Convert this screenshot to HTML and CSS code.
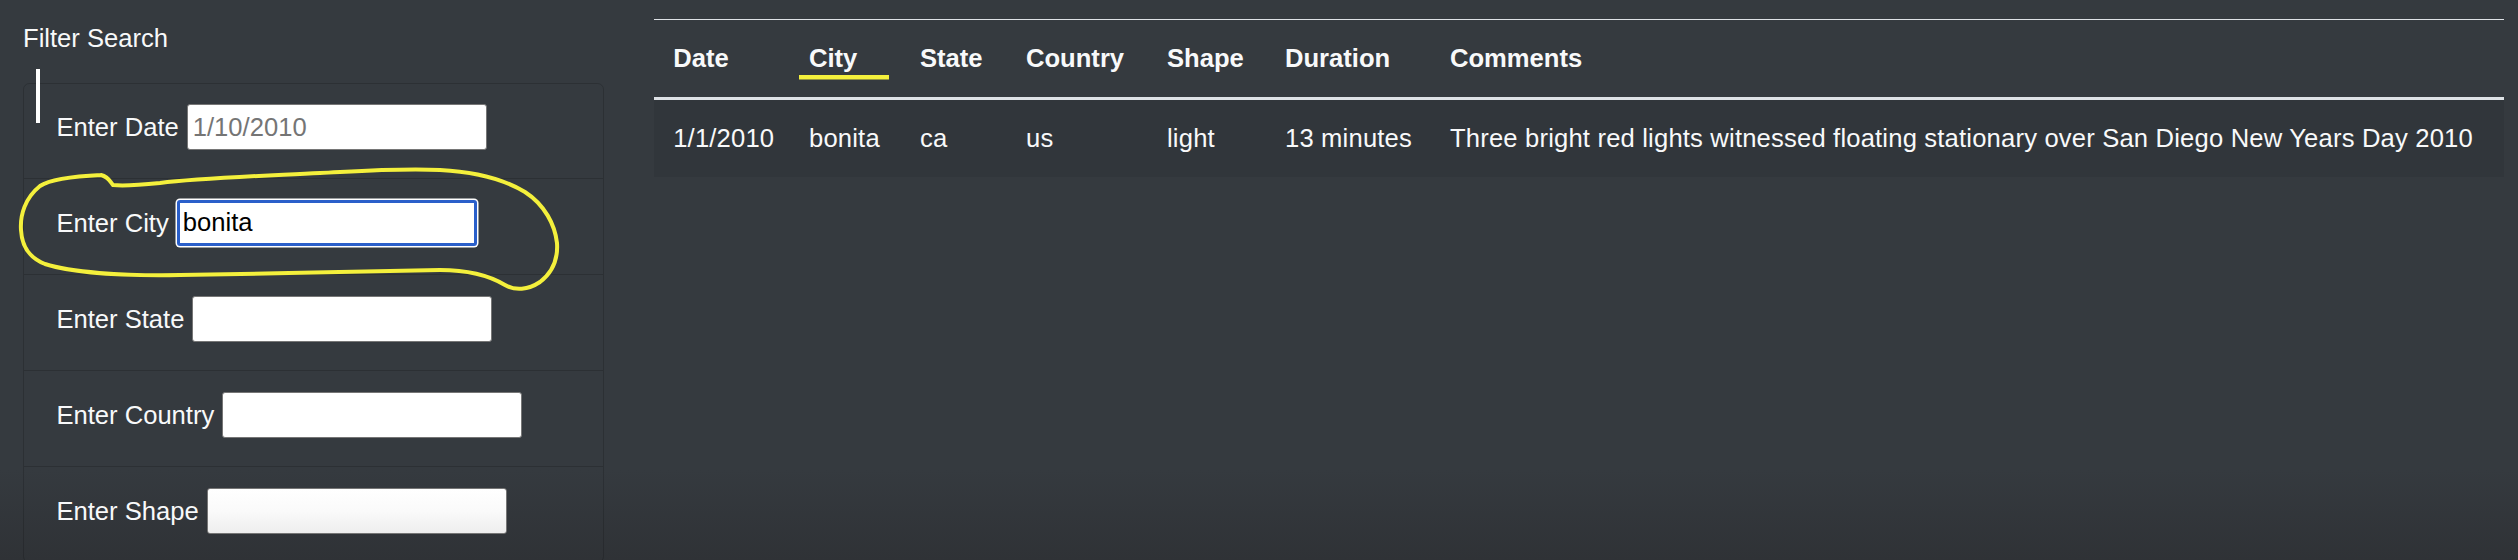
FILE: index.html
```html
<!DOCTYPE html>
<html lang="en">
<head>
<meta charset="utf-8">
<title>UFO Sightings</title>
<link rel="stylesheet" href="styles.css">
</head>
<body>
<div class="page">
  <aside class="sidebar">
    <h5 class="title">Filter Search</h5>
    <span class="caret-bar"></span>
    <ul class="filters">
      <li class="filter first">
        <label for="datetime">Enter Date</label>
        <input id="datetime" type="text" placeholder="1/10/2010">
      </li>
      <li class="filter">
        <label for="city">Enter City</label>
        <input id="city" class="focused" type="text" value="bonita">
      </li>
      <li class="filter">
        <label for="state">Enter State</label>
        <input id="state" type="text">
      </li>
      <li class="filter">
        <label for="country">Enter Country</label>
        <input id="country" type="text">
      </li>
      <li class="filter">
        <label for="shape">Enter Shape</label>
        <input id="shape" class="soft" type="text">
      </li>
    </ul>
  </aside>
  <main class="results">
    <table class="ufo-table">
      <colgroup>
        <col class="c-date"><col class="c-city"><col class="c-state"><col class="c-country"><col class="c-shape"><col class="c-duration"><col class="c-comments">
      </colgroup>
      <thead>
        <tr>
          <th>Date</th>
          <th>City</th>
          <th>State</th>
          <th>Country</th>
          <th>Shape</th>
          <th>Duration</th>
          <th>Comments</th>
        </tr>
      </thead>
      <tbody>
        <tr>
          <td>1/1/2010</td>
          <td>bonita</td>
          <td>ca</td>
          <td>us</td>
          <td>light</td>
          <td>13 minutes</td>
          <td>Three bright red lights witnessed floating stationary over San Diego New Years Day 2010</td>
        </tr>
      </tbody>
    </table>
  </main>
  <svg class="annotations" width="2518" height="560" viewBox="0 0 2518 560" aria-hidden="true">
    <path d="M101,175 C80,176 52,178 40,186 C25,198 20,215 21,230 C22,248 30,258 45,264 C70,272 120,276 180,275 C260,274 380,271 440,270 C470,270 490,276 505,285 C515,291 528,290 540,282 C553,272 558,258 557,243 C555,225 545,205 525,192 C505,180 480,172 440,170 C400,168 360,171 320,173 C260,176 200,178 160,183 C140,185 122,186 113,185 C110,182 109,177 101,175" fill="none" stroke="#f4f03c" stroke-width="4" stroke-linecap="round" stroke-linejoin="round"/>
    <rect x="799" y="75" width="90" height="4.5" fill="#f4f03c"/>
  </svg>
</div>
</body>
</html>
```

FILE: styles.css
```css
html, body {
  margin: 0;
  padding: 0;
}

body {
  width: 2518px;
  height: 560px;
  overflow: hidden;
  background: linear-gradient(to bottom, #353a3f 0, #353a3f 470px, #2f3236 560px);
  color: #f8f9fa;
  font-family: "Liberation Sans", Arial, sans-serif;
  font-size: 25.6px;
  line-height: 38.4px;
}

.page {
  position: relative;
  display: flex;
  align-items: flex-start;
  padding-left: 23px;
}

.sidebar {
  position: relative;
  width: 581px;
  flex: none;
}

.title {
  margin: 0;
  padding-top: 19px;
  font-size: 25.6px;
  font-weight: normal;
  line-height: 38.4px;
  color: #f8f9fa;
}

.caret-bar {
  position: absolute;
  left: 13px;
  top: 69px;
  width: 4px;
  height: 54px;
  background: #ffffff;
}

.filters {
  list-style: none;
  margin: 25.6px 0 0 0;
  padding: 0;
  border: 1.6px solid rgba(0, 0, 0, 0.16);
  border-radius: 6.4px;
}

.filter {
  box-sizing: border-box;
  height: 96px;
  display: flex;
  align-items: center;
  gap: 8px;
  padding: 0 32px 8px 32.4px;
  border-top: 1.6px solid rgba(0, 0, 0, 0.16);
}

.filter.first {
  height: 94.4px;
  border-top: none;
}

.filter label {
  white-space: nowrap;
  color: #f8f9fa;
}

.filter input {
  box-sizing: border-box;
  width: 300px;
  height: 46px;
  margin: 0;
  padding: 0 5px;
  border: 1.6px solid #767676;
  border-radius: 3px;
  background: #ffffff;
  color: #000000;
  font-family: "Liberation Sans", Arial, sans-serif;
  font-size: 25.6px;
  outline: none;
}

.filter input::placeholder {
  color: #757575;
  opacity: 1;
}

.filter input.focused {
  border: 3.5px solid #2a5fca;
  box-shadow: 0 0 0 1.5px #ffffff;
  padding-left: 3px;
}

.filter input.soft {
  background: linear-gradient(to bottom, #ffffff 0%, #fafafa 50%, #eeeeee 100%);
}

.results {
  margin-left: 50px;
  flex: none;
}

.ufo-table {
  margin-top: 19px;
  width: 1850px;
  border-collapse: collapse;
  table-layout: fixed;
  color: #f8f9fa;
}

.c-date { width: 135.8px; }
.c-city { width: 111px; }
.c-state { width: 106px; }
.c-country { width: 141px; }
.c-shape { width: 118px; }
.c-duration { width: 165px; }
.c-comments { width: 1073.2px; }

.ufo-table th,
.ufo-table td {
  padding: 19.2px;
  text-align: left;
  vertical-align: top;
  white-space: nowrap;
  line-height: 38.4px;
  border-top: 1.6px solid #dee2e6;
}

.ufo-table thead th {
  font-weight: bold;
  border-bottom: 3.2px solid #dee2e6;
}

.ufo-table tbody td {
  letter-spacing: 0.18px;
}

.ufo-table tbody tr {
  background: rgba(0, 0, 0, 0.06);
}

.annotations {
  position: absolute;
  left: 0;
  top: 0;
  pointer-events: none;
}
```
